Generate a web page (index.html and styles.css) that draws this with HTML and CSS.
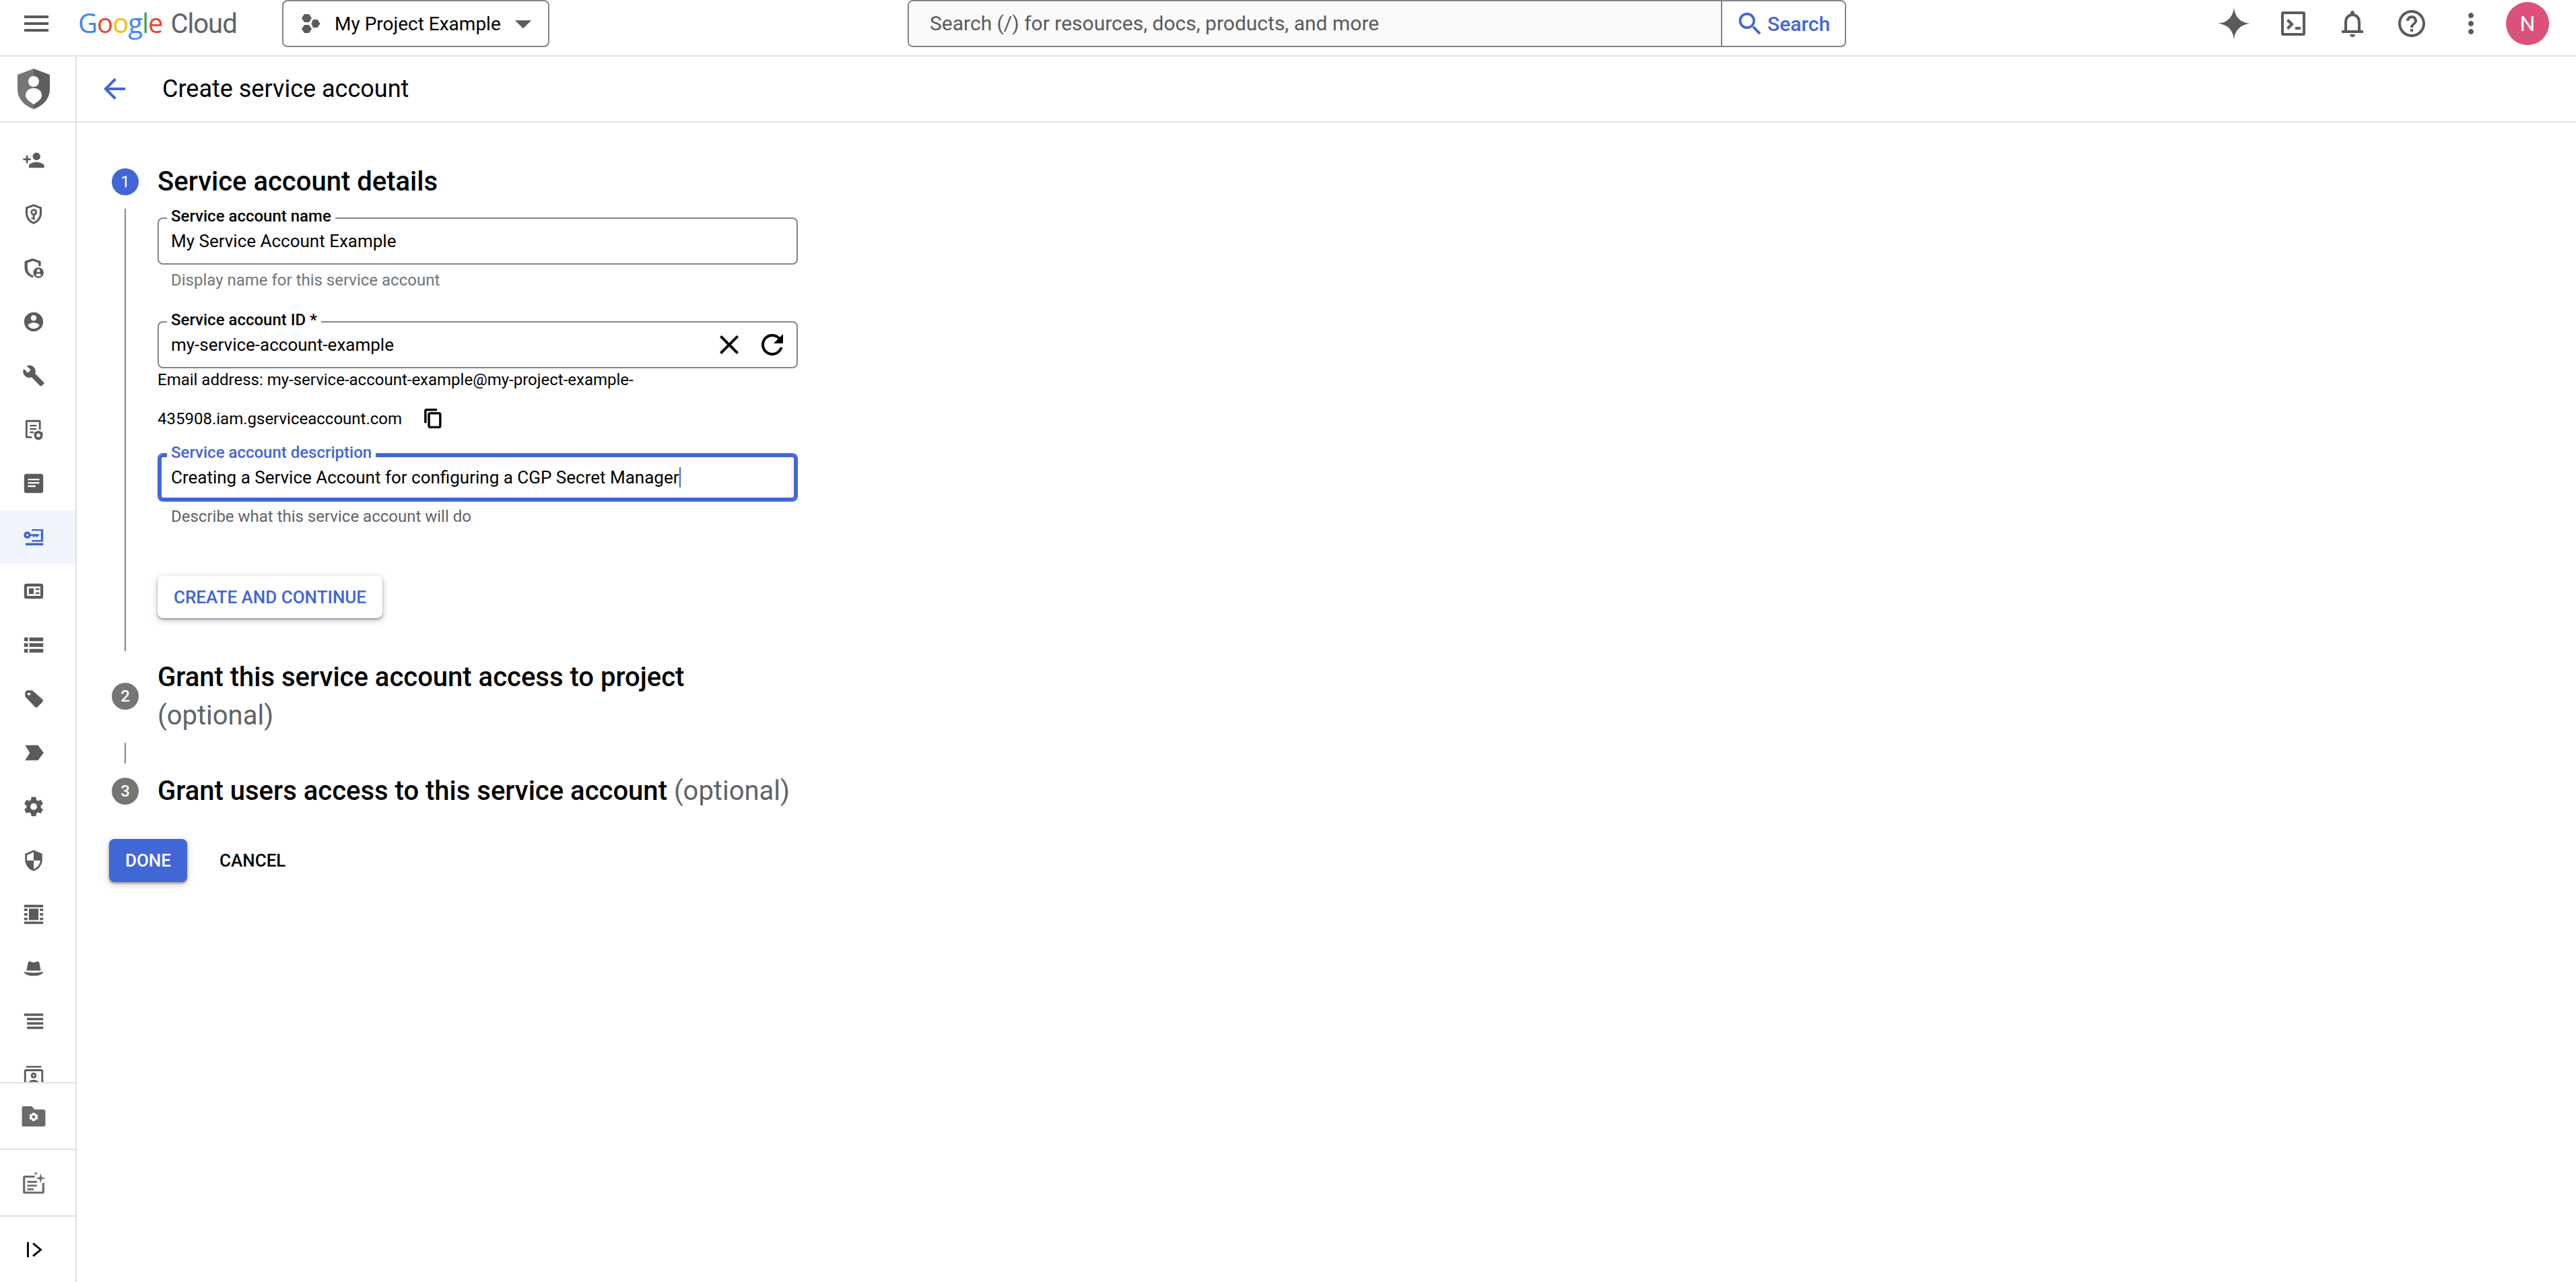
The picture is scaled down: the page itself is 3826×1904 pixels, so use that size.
FILE: index.html
```html
<!DOCTYPE html>
<html lang="en">
<head>
<meta charset="utf-8">
<title>Create service account</title>
<link rel="stylesheet" href="styles.css">
</head>
<body>
<header class="topbar">
  <svg class="ico-48 menu" viewBox="0 0 24 24"><path d="M3 18h18v-2H3v2zm0-5h18v-2H3v2zm0-7v2h18V6H3z"/></svg>
  <div class="logo"><span class="g-blue">G</span><span class="g-red">o</span><span class="g-yellow">o</span><span class="g-blue">g</span><span class="g-green">l</span><span class="g-red">e</span><span class="logo-cloud">Cloud</span></div>
  <div class="project">
    <svg class="project-ico" viewBox="0 0 28 28"><path d="M4 0h7l4 6-4 6H4L0 6zM4 16h7l4 6-4 6H4l-4-6zM17 8h6.500l4 6-4 6H17l-2.500-6z"/></svg>
    <span class="project-name">My Project Example</span>
    <svg class="caret-ico" viewBox="0 0 24 24"><path d="M7 10l5 5 5-5z"/></svg>
  </div>
  <div class="search">
    <div class="search-input">Search (/) for resources, docs, products, and more</div>
    <div class="search-btn">
      <svg class="search-ico" viewBox="0 0 24 24"><path d="M15.500 14h-.79l-.28-.27A6.471 6.471 0 0 0 16 9.500 6.500 6.500 0 1 0 9.500 16c1.610 0 3.090-.59 4.230-1.570l.27.28v.79l5 4.990L20.490 19l-4.990-5zm-6 0C7.010 14 5 11.990 5 9.500S7.010 5 9.500 5 14 7.010 14 9.500 11.990 14 9.500 14z"/></svg>
      <span>Search</span>
    </div>
  </div>
  <div class="top-actions">
    <div class="slot"><svg class="ico-48" viewBox="0 0 48 48"><path d="M24 0C25 14 34 23 48 24 34 25 25 34 24 48 23 34 14 25 0 24 14 23 23 14 24 0z"/></svg></div>
    <div class="slot"><svg class="ico-48" viewBox="0 0 48 48"><path fill-rule="evenodd" d="M9 6h30a3 3 0 0 1 3 3v30a3 3 0 0 1-3 3H9a3 3 0 0 1-3-3V9a3 3 0 0 1 3-3zm1 4v28h28V10z"/><path d="M14 20l3-3 8 8-8 8-3-3 5-5zM27 29h8v4h-8z"/></svg></div>
    <div class="slot"><svg class="ico-48" viewBox="0 0 24 24"><path d="M12 22c1.100 0 2-.9 2-2h-4c0 1.100.9 2 2 2zm6-6v-5c0-3.070-1.630-5.640-4.500-6.320V4c0-.83-.67-1.500-1.500-1.500s-1.500.67-1.500 1.500v.68C7.640 5.360 6 7.920 6 11v6H4v2h16v-2h-2zm-2 1H8v-6c0-2.480 1.510-4.500 4-4.500s4 2.020 4 4.500v6z"/></svg></div>
    <div class="slot"><svg class="ico-48" viewBox="0 0 24 24"><path d="M11 18h2v-2h-2v2zm1-16C6.480 2 2 6.480 2 12s4.480 10 10 10 10-4.480 10-10S17.520 2 12 2zm0 18c-4.410 0-8-3.590-8-8s3.590-8 8-8 8 3.590 8 8-3.590 8-8 8zm0-14c-2.210 0-4 1.790-4 4h2c0-1.100.9-2 2-2s2 .9 2 2c0 2-3 1.750-3 5h2c0-2.250 3-2.500 3-5 0-2.210-1.790-4-4-4z"/></svg></div>
    <div class="slot"><svg class="ico-48" viewBox="0 0 24 24"><path d="M12 8c1.100 0 2-.9 2-2s-.9-2-2-2-2 .9-2 2 .9 2 2 2zm0 2c-1.100 0-2 .9-2 2s.9 2 2 2 2-.9 2-2-.9-2-2-2zm0 6c-1.100 0-2 .9-2 2s.9 2 2 2 2-.9 2-2-.9-2-2-2z"/></svg></div>
    <div class="avatar">N</div>
  </div>
</header>

<div class="shell">
  <aside class="sidebar">
    <div class="side-head">
      <svg class="shield-big" viewBox="0 0 48 60">
        <path class="shield-l" d="M24 0L0 9v21c0 15 10 25 24 30z"/>
        <path class="shield-r" d="M24 0l24 9v21c0 15-10 25-24 30z"/>
        <ellipse class="white" cx="24" cy="19" rx="8" ry="8"/>
        <path class="white" d="M24 29c9 0 12 6 12 11s-6 9-12 13c-6-4-12-8-12-13s3-11 12-11z"/>
      </svg>
    </div>
    <nav class="side-nav">
      <div class="side-row"><svg class="ico" viewBox="0 0 24 24"><path d="M15 12c2.210 0 4-1.790 4-4s-1.790-4-4-4-4 1.790-4 4 1.790 4 4 4zm-9-2V7H4v3H1v2h3v3h2v-3h3v-2H6zm9 4c-2.670 0-8 1.340-8 4v2h16v-2c0-2.660-5.330-4-8-4z"/></svg></div>
      <div class="side-row"><svg class="ico" viewBox="0 0 24 24"><path fill-rule="evenodd" d="M12 1.500l8.500 3.200v6.500c0 5.200-3.600 10-8.500 11.300-4.900-1.300-8.500-6.100-8.500-11.300V4.700zm0 2.400L5.700 6.200v5c0 4 2.700 7.800 6.300 9 3.600-1.200 6.300-5 6.300-9v-5z"/><path fill-rule="evenodd" d="M12 6.500a3.500 3.500 0 0 1 1.200 6.800V18h-2v-1h-1.500v-1.500h1.500v-2.200A3.500 3.500 0 0 1 12 6.500zm0 2a1.500 1.500 0 1 0 0 3 1.500 1.500 0 0 0 0-3z"/></svg></div>
      <div class="side-row"><svg class="ico" viewBox="0 0 24 24"><path d="M11 2L2.500 5v6.500c0 5 3.500 9.700 8.500 10.500l1-1.900c-4-.7-6.500-4.600-6.500-8.600V6.500L11 4.500l6 2V10h2.500V5z"/><path fill-rule="evenodd" d="M17 11.500a5.500 5.500 0 1 1 0 11 5.500 5.500 0 0 1 0-11zm0 1.700a1.700 1.700 0 1 0 0 3.400 1.700 1.700 0 0 0 0-3.400zm-3 6.400c.8.700 1.900 1.100 3 1.100s2.200-.4 3-1.100c-.5-1-1.700-1.700-3-1.700s-2.500.7-3 1.700z"/></svg></div>
      <div class="side-row"><svg class="ico" viewBox="0 0 24 24"><path d="M12 2C6.480 2 2 6.480 2 12s4.480 10 10 10 10-4.480 10-10S17.520 2 12 2zm0 3c1.660 0 3 1.340 3 3s-1.340 3-3 3-3-1.340-3-3 1.340-3 3-3zm0 14.200c-2.500 0-4.710-1.280-6-3.220.03-1.990 4-3.080 6-3.080 1.990 0 5.970 1.090 6 3.080-1.290 1.940-3.500 3.220-6 3.220z"/></svg></div>
      <div class="side-row"><svg class="ico" viewBox="0 0 24 24"><path d="M22.700 19l-9.100-9.100c.9-2.300.4-5-1.500-6.900-2-2-5-2.400-7.400-1.300L9 6 6 9 1.600 4.700C.4 7.100.9 10.100 2.900 12.100c1.900 1.900 4.600 2.400 6.900 1.500l9.100 9.100c.4.4 1 .4 1.400 0l2.300-2.300c.5-.4.5-1.100.1-1.400z"/></svg></div>
      <div class="side-row"><svg class="ico" viewBox="0 0 24 24"><path d="M5 2h13c.8 0 1.500.7 1.500 1.500V12h-2V4H5.500v15H10v2H5c-.8 0-1.500-.7-1.500-1.500v-16C3.500 2.700 4.200 2 5 2z"/><path d="M8 7h7v1.700H8zM8 10.500h7v1.700H8zM8 14h4v1.700H8z"/><path fill-rule="evenodd" d="M17 13l4.500 2v3.500c0 2.300-2 4-4.500 4.500-2.500-.5-4.500-2.200-4.500-4.500V15zm0 3a2 2 0 1 0 0 4 2 2 0 0 0 0-4z"/></svg></div>
      <div class="side-row"><svg class="ico" viewBox="0 0 24 24"><path fill-rule="evenodd" d="M4.500 2h15A2.500 2.500 0 0 1 22 4.500v15a2.500 2.500 0 0 1-2.500 2.500h-15A2.500 2.500 0 0 1 2 19.500v-15A2.500 2.500 0 0 1 4.500 2zM6 7v1.700h12V7zm0 3.500v1.700h12v-1.700zM6 14v1.700h8V14z"/></svg></div>
      <div class="side-row side-row-active"><svg class="ico" viewBox="0 0 24 24"><path d="M10 3.500h12v13H10v-1.700h9.600V5.200H10zM3.500 18H22v2.500H3.500z"/><path fill-rule="evenodd" d="M5.400 6a3.600 3.600 0 0 1 3.400 2.600h8.700v1.900h-1.300V12h-1.700v-1.500H13V12h-1.700v-1.500H8.800A3.600 3.600 0 1 1 5.400 6zm0 2.400a1.200 1.200 0 1 0 0 2.400 1.200 1.200 0 0 0 0-2.400z"/></svg></div>
      <div class="side-row"><svg class="ico" viewBox="0 0 24 24"><path fill-rule="evenodd" d="M4.500 4h15A2.500 2.500 0 0 1 22 6.500v11a2.500 2.500 0 0 1-2.500 2.500h-15A2.500 2.500 0 0 1 2 17.500v-11A2.500 2.500 0 0 1 4.500 4zM5 7v10h14V7zM7 9h5v6H7zM14 9h4v1.800h-4zM14 13.200h4V15h-4z"/></svg></div>
      <div class="side-row"><svg class="ico" viewBox="0 0 24 24"><path d="M2 4h4v4H2zM7.500 4H22v4H7.500zM2 10h4v4H2zM7.500 10H22v4H7.500zM2 16h4v4H2zM7.500 16H22v4H7.500z"/></svg></div>
      <div class="side-row"><svg class="ico" viewBox="0 0 24 24"><path fill-rule="evenodd" d="M6 3h3.500c.6 0 1.200.2 1.600.6l10.200 9c.8.800.8 1.800 0 2.600l-5.200 5.200c-.8.800-1.800.8-2.600 0L3.600 10.200C3.200 9.800 3 9.300 3 8.700V6c0-1.700 1.300-3 3-3zm1 2.500a1.800 1.300 0 1 0 0 2.600 1.800 1.300 0 0 0 0-2.600z"/></svg></div>
      <div class="side-row"><svg class="ico" viewBox="0 0 24 24"><path d="M3 4h13.500l6 8-6 8H3l5-8z"/></svg></div>
      <div class="side-row"><svg class="ico" viewBox="0 0 24 24"><path d="M19.430 12.980c.04-.32.07-.64.07-.98s-.03-.66-.07-.98l2.110-1.650c.19-.15.24-.42.12-.64l-2-3.460c-.12-.22-.39-.3-.61-.22l-2.490 1c-.52-.4-1.080-.73-1.690-.98l-.38-2.650C14.460 2.180 14.250 2 14 2h-4c-.25 0-.46.18-.49.42l-.38 2.650c-.61.25-1.170.59-1.690.98l-2.490-1c-.23-.09-.49 0-.61.22l-2 3.460c-.13.22-.07.49.12.64l2.110 1.650c-.04.32-.07.65-.07.98s.03.66.07.98l-2.110 1.650c-.19.15-.24.42-.12.64l2 3.460c.12.22.39.3.61.22l2.490-1c.52.4 1.080.73 1.690.98l.38 2.650c.03.24.24.42.49.42h4c.25 0 .46-.18.49-.42l.38-2.650c.61-.25 1.170-.59 1.690-.98l2.490 1c.23.09.49 0 .61-.22l2-3.460c.12-.22.07-.49-.12-.64l-2.110-1.650zM12 15.500c-1.930 0-3.500-1.570-3.500-3.500s1.570-3.500 3.500-3.500 3.500 1.570 3.500 3.500-1.570 3.500-3.500 3.500z"/></svg></div>
      <div class="side-row"><svg class="ico" viewBox="0 0 24 24"><path d="M12 1L3 5v6c0 5.550 3.840 10.740 9 12 5.160-1.260 9-6.450 9-12V5l-9-4zm0 10.990h7c-.53 4.120-3.280 7.790-7 8.940V12H5V6.300l7-3.110v8.800z"/></svg></div>
      <div class="side-row"><svg class="ico" viewBox="0 0 24 24"><path d="M2 2h20v2.500H2zM2 19.500h20V22H2zM7 6h10v12H7zM2 6h3.500v2.500H2zM18.500 6H22v2.500h-3.500zM2 10.700h3.500v2.600H2zM18.500 10.700H22v2.600h-3.500zM2 15.500h3.500V18H2zM18.500 15.500H22V18h-3.500z"/></svg></div>
      <div class="side-row"><svg class="ico" viewBox="0 0 24 24"><path d="M4.500 14.500L6 6.500c.2-1.200 1.200-1.800 2.300-1.500L12 6.200l3.700-1.200c1.100-.3 2.100.3 2.300 1.500l1.500 8z"/><path d="M2 15.500c2.500.8 6 1.200 10 1.200s7.500-.4 10-1.200c0 2.500-4 4.500-10 4.500S2 18 2 15.500z"/></svg></div>
      <div class="side-row"><svg class="ico" viewBox="0 0 24 24"><path d="M2 3h20v2.500H2zM5 7.600h17v2.500H5zM5 12.200h17v2.500H5zM5 16.800h17v2.500H5z"/></svg></div>
      <div class="side-row"><svg class="ico" viewBox="0 0 24 24"><path d="M4 1.500h16v1.700H4z"/><path fill-rule="evenodd" d="M4 5h16a2 2 0 0 1 2 2v13a2 2 0 0 1-2 2H4a2 2 0 0 1-2-2V7a2 2 0 0 1 2-2zm0 2v13h2c.5-2.500 3-4 6-4s5.500 1.500 6 4h2V7zm8 1.500a3 3 0 1 1 0 6 3 3 0 0 1 0-6zm0 2a1 1 0 1 0 0 2 1 1 0 0 0 0-2z"/></svg></div>
    </nav>
    <div class="side-foot"><svg class="ico ico-soft" viewBox="0 0 24 24"><path fill-rule="evenodd" d="M2.500 2.500H10l3 3h8.500c.8 0 1.500.7 1.500 1.500v13c0 .8-.7 1.500-1.500 1.500h-19C1.700 21.500 1 20.800 1 20V4c0-.8.700-1.500 1.500-1.500zM12 8.500l-1.400.4-.4 1.200-1.300-.3-1 1.700.9 1-.9 1 1 1.700 1.300-.3.400 1.200 1.400.4 1.400-.4.400-1.200 1.300.3 1-1.700-.9-1 .9-1-1-1.700-1.300.3-.4-1.200zm0 2.500a1.500 1.500 0 1 1 0 3 1.500 1.500 0 0 1 0-3z"/></svg></div>
    <div class="side-foot"><svg class="ico ico-soft" viewBox="0 0 24 24"><path d="M3.500 5H13v2H4v13h16v-8h2v8.500c0 .8-.7 1.500-1.500 1.500h-17C2.700 22 2 21.300 2 20.500v-14C2 5.700 2.700 5 3.500 5z"/><path d="M6 10h9v1.800H6zM6 13.500h9v1.800H6zM6 17h6v1.800H6zM18.500 3l1 3.500 3.500 1-3.500 1-1 3.500-1-3.500-3.500-1 3.500-1zM14 1l.5 1.500L16 3l-1.500.5L14 5l-.5-1.500L12 3l1.500-.5z"/></svg></div>
    <div class="side-foot"><svg class="ico ico-black" viewBox="0 0 24 24"><path d="M5 4h2v16H5zM12 4.500L21 12l-9 7.500-1.300-1.600L18 12l-7.300-5.900z"/></svg></div>
  </aside>

  <main class="main">
    <div class="subhead">
      <svg class="ico-48 blue-ico" viewBox="0 0 24 24"><path d="M20 11H7.830l5.590-5.590L12 4l-8 8 8 8 1.410-1.410L7.830 13H20v-2z"/></svg>
      <h1 class="page-title">Create service account</h1>
    </div>

    <div class="stepper">
      <div class="step-head">
        <span class="step-num step-num-active">1</span>
        <h2 class="step-title">Service account details</h2>
      </div>
      <div class="step-body">
        <div class="field">
          <span class="field-label">Service account name</span>
          <span class="field-value">My Service Account Example</span>
        </div>
        <div class="hint">Display name for this service account</div>

        <div class="field field-id">
          <span class="field-label">Service account ID *</span>
          <span class="field-value">my-service-account-example</span>
          <svg class="ico-48 black-ico" viewBox="0 0 24 24"><path d="M19 6.410L17.590 5 12 10.590 6.410 5 5 6.410 10.590 12 5 17.590 6.410 19 12 13.410 17.590 19 19 17.590 13.410 12z"/></svg>
          <svg class="ico-48 black-ico" viewBox="0 0 24 24"><path d="M17.650 6.350C16.200 4.900 14.210 4 12 4c-4.420 0-7.990 3.580-7.990 8s3.570 8 7.990 8c3.730 0 6.840-2.550 7.730-6h-2.080c-.82 2.330-3.040 4-5.650 4-3.310 0-6-2.690-6-6s2.690-6 6-6c1.660 0 3.140.69 4.220 1.780L13 11h7V4l-2.350 2.350z"/></svg>
        </div>
        <div class="email">Email address: my-service-account-example@my-project-example-</div>
        <div class="email email-second">
          <span>435908.iam.gserviceaccount.com</span>
          <svg class="copy-ico" viewBox="0 0 24 24"><path d="M16 1H4c-1.100 0-2 .9-2 2v14h2V3h12V1zm3 4H8c-1.100 0-2 .9-2 2v14c0 1.100.9 2 2 2h11c1.100 0 2-.9 2-2V7c0-1.100-.9-2-2-2zm0 16H8V7h11v14z"/></svg>
        </div>

        <div class="field field-focus">
          <span class="field-label">Service account description</span>
          <span class="field-value">Creating a Service Account for configuring a CGP Secret Manager</span><span class="text-caret"></span>
        </div>
        <div class="hint hint-dark">Describe what this service account will do</div>

        <button class="btn btn-raised" type="button">CREATE AND CONTINUE</button>
      </div>

      <div class="step-head step-head-next">
        <span class="step-num">2</span>
        <h2 class="step-title step-title-tall">Grant this service account access to project <span class="optional">(optional)</span></h2>
      </div>
      <div class="connector"></div>
      <div class="step-head step-head-last">
        <span class="step-num">3</span>
        <h2 class="step-title step-title-tall">Grant users access to this service account <span class="optional">(optional)</span></h2>
      </div>

      <div class="actions">
        <button class="btn btn-primary" type="button">DONE</button>
        <button class="btn btn-text" type="button">CANCEL</button>
      </div>
    </div>
  </main>
</div>
</body>
</html>
```

FILE: styles.css
```css
* { box-sizing: border-box; }
html, body { margin: 0; padding: 0; height: 100%; background: #fff; overflow: hidden; }
body { font-family: Roboto, "Liberation Sans", sans-serif; color: #000; display: flex; flex-direction: column; }
svg { display: block; flex: none; fill: #5b5b5b; }
h1, h2 { margin: 0; }

.topbar { height: 84px; flex: none; display: flex; align-items: flex-start; border-bottom: 2px solid #e0e0e0; padding-left: 30px; }
.ico-48 { width: 48px; height: 48px; }
.menu { margin-top: 11px; }
.logo { width: 232px; margin-left: 38px; height: 70px; font-size: 40px; line-height: 68px; letter-spacing: -1px; white-space: nowrap; font-family: "Open Sans", Roboto, sans-serif; }
.g-blue { color: #4285f4; } .g-red { color: #ea4335; } .g-yellow { color: #fbbc05; } .g-green { color: #34a853; }
.logo-cloud { color: #5f6368; margin-left: 12px; font-family: Roboto, sans-serif; font-weight: 400; }
.project { margin-left: 71px; width: 397px; height: 70px; border: 2px solid #80868b; border-radius: 8px; display: flex; align-items: center; padding-left: 27px; }
.project-ico { width: 28px; height: 28px; }
.project-name { margin-left: 21px; font-size: 28px; white-space: nowrap; }
.caret-ico { width: 58px; height: 58px; margin-left: 4px; }
.search { margin-left: 532px; width: 1394px; height: 70px; border: 2px solid #80868b; border-radius: 8px; display: flex; overflow: hidden; }
.search-input { width: 1208px; background: #fafafa; border-right: 2px solid #80868b; padding-left: 31px; font-size: 30px; color: #5a5a5a; line-height: 66px; }
.search-btn { flex: 1; display: flex; align-items: center; padding-left: 19px; color: #4166d5; font-size: 30px; font-weight: 500; }
.search-ico { width: 45px; height: 45px; fill: #4166d5; margin-right: 3px; }
.top-actions { margin-left: auto; padding-right: 40px; display: flex; align-items: center; height: 70px; }
.slot { width: 88px; display: flex; justify-content: center; }
.avatar { width: 64px; height: 64px; margin-left: 8px; border-radius: 50%; background: #dc5179; color: #fff; font-size: 32px; line-height: 64px; text-align: center; }

.shell { flex: 1; min-height: 0; display: flex; }
.sidebar { width: 114px; flex: none; border-right: 2px solid #e0e0e0; display: flex; flex-direction: column; }
.side-head { height: 98px; flex: none; border-bottom: 2px solid #e0e0e0; display: flex; align-items: center; padding-left: 26px; }
.shield-big { width: 48px; height: 60px; }
.shield-l { fill: #767676; } .shield-r { fill: #5f5f5f; } .white { fill: #fff; }
.side-nav { flex: 1; min-height: 0; overflow: hidden; padding-top: 16px; border-bottom: 2px solid #e0e0e0; }
.side-row { height: 80px; display: flex; align-items: center; padding-left: 33px; }
.side-row-active { background: #eff4fd; }
.side-row-active svg { fill: #4166d5; }
.ico { width: 34px; height: 34px; }
.ico-soft { fill: #6b6b6b; width: 38px; height: 38px; margin-left: -2px; }
.ico-black { fill: #000; }
.side-foot { height: 99px; flex: none; display: flex; align-items: center; padding-left: 33px; border-bottom: 2px solid #e0e0e0; }
.side-foot:last-child { border-bottom: 0; height: 97px; }

.main { flex: 1; min-width: 0; }
.subhead { height: 98px; border-bottom: 2px solid #e0e0e0; display: flex; align-items: center; padding-left: 32px; }
.blue-ico { fill: #4166d5; }
.page-title { margin-left: 47px; font-size: 36px; font-weight: 400; line-height: 48px; }

.stepper { padding: 68px 0 0 52px; }
.step-head { display: flex; align-items: center; }
.step-num { width: 40px; height: 40px; flex: none; border-radius: 50%; background: #757575; color: #fff; font-size: 24px; font-weight: 500; line-height: 40px; text-align: center; }
.step-num-active { background: #4166d5; font-weight: 400; }
.step-title { margin-left: 28px; font-size: 40px; font-weight: 500; line-height: 40px; }
.step-title-tall { line-height: 57px; width: 960px; }
.optional { color: #5f6368; font-weight: 400; }
.step-body { margin: 20px 0 0 19px; padding: 13px 0 49px 47px; border-left: 2px solid #80868b; width: 1000px; }

.field { position: relative; width: 951px; height: 70px; border: 2px solid #80868b; border-radius: 8px; display: flex; align-items: center; padding-left: 18px; }
.field-label { position: absolute; left: 12px; top: -19px; padding: 0 6px; background: #fff; font-size: 24px; font-weight: 500; line-height: 30px; white-space: nowrap; }
.field-value { font-size: 26px; white-space: nowrap; }
.hint { margin-top: 8px; padding-left: 20px; font-size: 24px; line-height: 30px; color: #70757a; }
.hint-dark { margin-top: 7px; color: #5f6368; }
.field-id { margin-top: 46px; }
.field-id .field-value { flex: 1; }
.field-id svg { margin-right: 16px; }
.field-id svg:last-child { margin-right: 12px; }
.black-ico { fill: #000; }
.email { margin-top: 2px; font-size: 24px; line-height: 30px; white-space: nowrap; }
.email-second { margin-top: 27px; display: flex; align-items: center; }
.copy-ico { width: 31px; height: 31px; margin-left: 31px; fill: #000; stroke: #000; stroke-width: .6; }
.field-focus { margin-top: 36px; height: 72px; box-shadow: inset 0 0 0 4px #4166d5; border-color: #4166d5; }
.field-focus .field-label { top: -18px; color: #4166d5; }
.text-caret { width: 2px; height: 30px; background: #4166d5; flex: none; }

.btn { display: block; border: 0; border-radius: 8px; font-family: inherit; font-size: 26px; font-weight: 500; cursor: pointer; }
.btn-raised { margin-top: 73px; width: 334px; height: 63px; background: #fff; color: #4166d5; box-shadow: 0 2px 3px rgba(60,64,67,.45), 0 3px 8px 2px rgba(60,64,67,.2); }
.step-head-next { margin-top: 10px; }
.connector { margin: 12px 0 0 19px; width: 2px; height: 31px; background: #80868b; }
.step-head-last { margin-top: 12px; }
.actions { margin: 43px 0 0 -4px; display: flex; gap: 24px; }
.btn-primary { width: 116px; height: 64px; background: #4166d5; color: #fff; box-shadow: 0 2px 3px rgba(60,64,67,.45), 0 3px 8px 2px rgba(60,64,67,.2); }
.btn-text { height: 64px; padding: 0 24px; background: transparent; color: #000; }
```
